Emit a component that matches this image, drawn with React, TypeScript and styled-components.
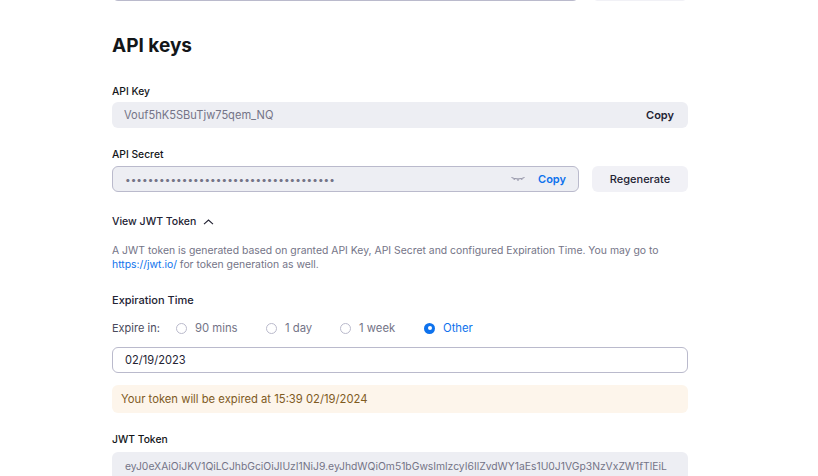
import React from 'react';
import styled, { createGlobalStyle } from 'styled-components';

const GlobalStyle = createGlobalStyle`
  html, body {
    margin: 0;
    padding: 0;
    height: 100%;
    overflow: hidden;
    background: #fff;
    font-family: Inter, "Liberation Sans", sans-serif;
  }
`;

const Page = styled.div`
  width: 576px;
  margin-left: 112px;
  margin-top: -25px;
  display: flex;
  flex-direction: column;
`;

const Row = styled.div`
  display: flex;
  gap: 13px;
`;

const Field = styled.div<{ $outlined?: boolean; $white?: boolean }>`
  flex: 1 0 auto;
  min-width: 0;
  height: 26px;
  box-sizing: border-box;
  display: flex;
  align-items: center;
  padding: 0 12px;
  border-radius: 6px;
  background: ${(p) => (p.$white ? '#fff' : '#edeef3')};
  border: ${(p) => (p.$outlined ? '1px solid #babacc' : 'none')};
  font-size: 11.1px;
  color: #6e7680;
  white-space: nowrap;
  overflow: hidden;
`;

const FieldValue = styled.span<{ $dark?: boolean }>`
  flex: 1;
  min-width: 0;
  overflow: hidden;
  color: ${(p) => (p.$dark ? '#232333' : '#747487')};
`;

const Dots = styled.span`
  flex: 1;
  font-size: 10px;
  letter-spacing: 0.05px;
  color: #747487;
`;

const CopyButton = styled.span<{ $blue?: boolean }>`
  font-size: 11px;
  font-weight: 600;
  margin-left: 13px;
  margin-right: ${(p) => (p.$blue ? 0 : 2)}px;
  color: ${(p) => (p.$blue ? '#0e72ed' : '#232333')};
`;

const Button = styled.div`
  width: 96px;
  height: 26px;
  flex: none;
  display: flex;
  align-items: center;
  justify-content: center;
  border-radius: 6px;
  background: #f1f1f6;
  font-size: 11px;
  font-weight: 500;
  color: #232333;
`;

const Title = styled.h2`
  margin: 33px 0 0;
  font-size: 19px;
  line-height: 24px;
  font-weight: 700;
  color: #131619;
`;

const Label = styled.div<{ $top: number; $gap: number }>`
  margin-top: ${(p) => p.$top}px;
  margin-bottom: ${(p) => p.$gap}px;
  font-size: 10.3px;
  line-height: 14px;
  font-weight: 500;
  color: #131619;
`;

const Toggle = styled.div`
  margin-top: 23px;
  display: flex;
  align-items: center;
  gap: 7px;
  font-size: 10.5px;
  line-height: 14px;
  font-weight: 500;
  color: #232333;
`;

const Help = styled.p`
  margin: 15px 0 0;
  font-size: 10.4px;
  line-height: 14px;
  color: #747487;
`;

const Link = styled.a`
  color: #0e72ed;
  text-decoration: none;
`;

const SectionLabel = styled.div`
  margin-top: 21px;
  font-size: 11px;
  line-height: 14px;
  font-weight: 500;
  color: #232333;
`;

const RadioRow = styled.div`
  margin-top: 14px;
  margin-bottom: 12px;
  height: 14px;
  display: flex;
  align-items: center;
  font-size: 11.3px;
  color: #232333;
`;

const RadioLead = styled.span`
  width: 64px;
  font-size: 11px;
  color: #4a4a5c;
`;

const RadioOption = styled.label<{ $width: number; $active?: boolean }>`
  width: ${(p) => p.$width}px;
  display: flex;
  align-items: center;
  gap: 8px;
  color: ${(p) => (p.$active ? '#0e72ed' : '#747487')};
`;

const RadioMark = styled.span<{ $active?: boolean }>`
  width: 11px;
  height: 11px;
  box-sizing: border-box;
  border-radius: 50%;
  display: flex;
  align-items: center;
  justify-content: center;
  background: ${(p) => (p.$active ? '#0e72ed' : '#fff')};
  border: ${(p) => (p.$active ? 'none' : '1px solid #babacc')};
  &::after {
    content: '';
    display: ${(p) => (p.$active ? 'block' : 'none')};
    width: 4px;
    height: 4px;
    border-radius: 50%;
    background: #fff;
  }
`;

const Notice = styled.div`
  margin-top: 12px;
  height: 28px;
  padding: 0 9px;
  display: flex;
  align-items: center;
  border-radius: 6px;
  background: #fdf5eb;
  font-size: 11.25px;
  color: #7f5b1f;
`;

const Token = styled.div`
  height: 40px;
  box-sizing: border-box;
  padding: 8px 13px 0;
  border-radius: 6px;
  background: #edeef3;
  font-size: 10.34px;
  line-height: 13px;
  color: #747487;
  white-space: nowrap;
  overflow: hidden;
`;

const radios = [
  { text: '90 mins', width: 90 },
  { text: '1 day', width: 74 },
  { text: '1 week', width: 84 },
  { text: 'Other', width: 60, active: true },
];

export default function App() {
  return (
    <>
      <GlobalStyle />
      <Page>
        <Row>
          <Field $outlined />
          <Button />
        </Row>

        <Title>API keys</Title>

        <Label $top={26} $gap={4}>API Key</Label>
        <Field>
          <FieldValue>Vouf5hK5SBuTjw75qem_NQ</FieldValue>
          <CopyButton>Copy</CopyButton>
        </Field>

        <Label $top={19} $gap={5}>API Secret</Label>
        <Row>
          <Field $outlined>
            <Dots>{'•'.repeat(37)}</Dots>
            <svg width="14" height="6" viewBox="0 0 14 6" fill="none" stroke="#8f8fa3" strokeWidth="1">
              <path d="M0.5 1.5 C4 3.4 10 3.4 13.5 1.5" />
              <path d="M7 3 V5" />
              <path d="M3.5 2.6 L3 4" />
              <path d="M10.5 2.6 L11 4" />
            </svg>
            <CopyButton $blue>Copy</CopyButton>
          </Field>
          <Button>Regenerate</Button>
        </Row>

        <Toggle>
          View JWT Token
          <svg width="11" height="6" viewBox="0 0 11 6" fill="none" stroke="#232333" strokeWidth="1.1">
            <path d="M1 5.2 L5.5 1 L10 5.2" />
          </svg>
        </Toggle>

        <Help>
          A JWT token is generated based on granted API Key, API Secret and configured Expiration Time. You may go to
          <br />
          <Link>https://jwt.io/</Link> for token generation as well.
        </Help>

        <SectionLabel>Expiration Time</SectionLabel>
        <RadioRow>
          <RadioLead>Expire in:</RadioLead>
          {radios.map((r) => (
            <RadioOption key={r.text} $width={r.width} $active={r.active}>
              <RadioMark $active={r.active} />
              {r.text}
            </RadioOption>
          ))}
        </RadioRow>
        <Field $outlined $white>
          <FieldValue $dark>02/19/2023</FieldValue>
        </Field>

        <Notice>Your token will be expired at 15:39 02/19/2024</Notice>

        <Label $top={19} $gap={6}>JWT Token</Label>
        <Token>eyJ0eXAiOiJKV1QiLCJhbGciOiJIUzI1NiJ9.eyJhdWQiOm51bGwsImlzcyI6IlZvdWY1aEs1U0J1VGp3NzVxZW1fTlEiL</Token>
      </Page>
    </>
  );
}
